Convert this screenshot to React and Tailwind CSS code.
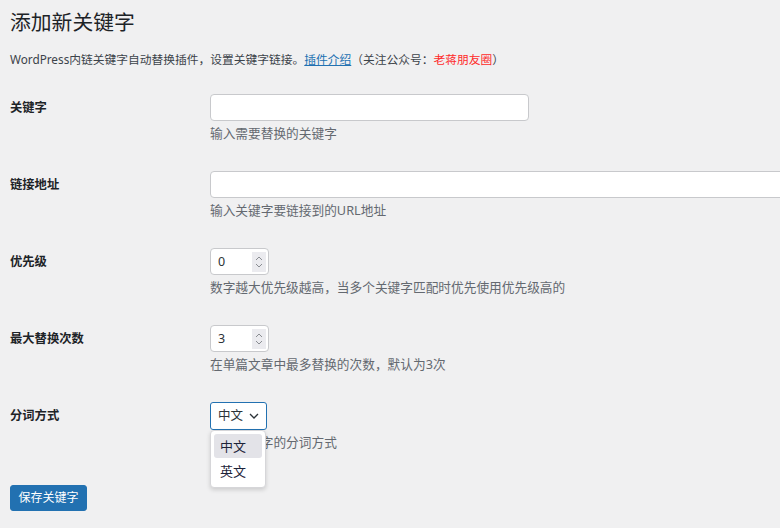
import React from 'react'

const font = { fontFamily: '"Noto Sans", "Noto Sans CJK SC", sans-serif' }

const Spinner = () => (
  <div className="absolute right-[2px] top-[3px] w-[14px] h-[20px] bg-[#ebebef] flex flex-col items-center justify-center gap-[2px]">
    <svg width="8" height="5" viewBox="0 0 8 5" fill="none">
      <path d="M1 4 L4 1 L7 4" stroke="#8a8d92" strokeWidth="1" />
    </svg>
    <svg width="8" height="5" viewBox="0 0 8 5" fill="none">
      <path d="M1 1 L4 4 L7 1" stroke="#8a8d92" strokeWidth="1" />
    </svg>
  </div>
)

const NumberBox = ({ value }) => (
  <div className="relative w-[59px] h-[27px] bg-white border border-[#c8c9cc] rounded-[4px]">
    <span className="absolute left-[7px] top-0 leading-[25px] text-[12.5px] text-[#2c3338]">{value}</span>
    <Spinner />
  </div>
)

const Row = ({ label, children, help }) => (
  <div className="flex items-start pt-[14px] pb-[15px]">
    <div className="w-[200px] shrink-0 leading-[27px] text-[12.3px] font-bold text-[#1d2327]">
      {label}
    </div>
    <div className="flex flex-col">
      {children}
      <p className="mt-[3px] leading-[18px] text-[12.7px] text-[#646970]">{help}</p>
    </div>
  </div>
)

export default function App() {
  return (
    <div className="min-h-screen w-[780px] overflow-hidden bg-[#f0f0f1] pl-[10px]" style={font}>
      <h1 className="pt-[7px] leading-[30px] text-[20.8px] font-normal text-[#1d2327]">添加新关键字</h1>
      <p className="mt-[13px] leading-[18px] text-[11.75px] text-[#3c434a]">
        WordPress内链关键字自动替换插件，设置关键字链接。
        <a className="text-[#2271b1] underline decoration-1 underline-offset-1">插件介绍</a>
        （关注公众号：<span className="text-[#ff2a2a]">老蒋朋友圈</span>）
      </p>

      <div className="mt-[12px]">
        <Row label="关键字" help="输入需要替换的关键字">
          <div className="w-[319px] h-[27px] bg-white border border-[#c8c9cc] rounded-[4px]" />
        </Row>

        <Row label="链接地址" help="输入关键字要链接到的URL地址">
          <div className="w-[620px] h-[27px] bg-white border border-[#c8c9cc] rounded-[4px]" />
        </Row>

        <Row label="优先级" help="数字越大优先级越高，当多个关键字匹配时优先使用优先级高的">
          <NumberBox value="0" />
        </Row>

        <Row label="最大替换次数" help="在单篇文章中最多替换的次数，默认为3次">
          <NumberBox value="3" />
        </Row>

        <Row label="分词方式" help="选择关键字的分词方式">
          <div className="relative z-10">
            <div className="w-[57px] h-[28px] bg-white border border-[#2271b1] rounded-[3px] flex items-center pl-[7px] gap-[6px]">
              <span className="text-[12.5px] text-[#2c3338] leading-[26px]">中文</span>
              <svg width="10" height="6" viewBox="0 0 10 6" fill="none">
                <path d="M1 1 L5 5 L9 1" stroke="#2c3338" strokeWidth="1.3" />
              </svg>
            </div>
            <div className="absolute left-0 top-[28px] w-[56px] h-[58px] bg-white border border-[#d6d6d9] rounded-[4px] shadow-[0_2px_4px_rgba(0,0,0,0.15)] px-[3px] pt-[3px]">
              <div className="h-[24px] rounded-[3px] bg-[#e3e3e8] pl-[6px] leading-[24px] text-[13px] text-[#1d2339]">中文</div>
              <div className="h-[26px] pl-[6px] leading-[26px] text-[13px] text-[#1d2339]">英文</div>
            </div>
          </div>
        </Row>
      </div>

      <button className="mt-[19px] w-[77px] h-[26px] bg-[#2271b1] border border-[#2271b1] rounded-[3px] text-white text-[12px] leading-[24px]">
        保存关键字
      </button>
    </div>
  )
}
